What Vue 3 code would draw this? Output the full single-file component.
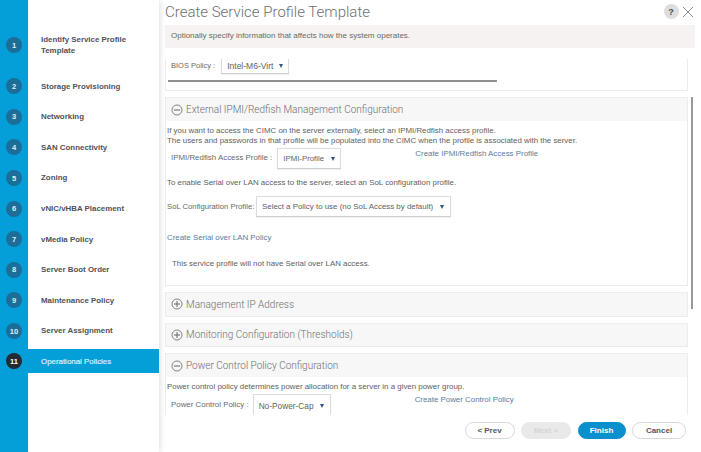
<script setup>
const steps = [
  'Identify Service Profile Template',
  'Storage Provisioning',
  'Networking',
  'SAN Connectivity',
  'Zoning',
  'vNIC/vHBA Placement',
  'vMedia Policy',
  'Server Boot Order',
  'Maintenance Policy',
  'Server Assignment',
  'Operational Policies'
]
const activeStep = 11
</script>

<template>
  <div class="wizard">
    <aside class="sidebar">
      <div
        v-for="(step, i) in steps"
        :key="step"
        class="step"
        :class="{ active: i + 1 === activeStep, first: i === 0 }"
      >
        <div class="rail"><span class="num">{{ i + 1 }}</span></div>
        <div class="label">{{ step }}</div>
      </div>
    </aside>

    <main class="main">
      <header class="title-row">
        <h1>Create Service Profile Template</h1>
        <span class="help">?</span>
        <svg class="close" width="12" height="12" viewBox="0 0 12 12">
          <path d="M1 1 L11 11 M11 1 L1 11" stroke="#6b6b6b" stroke-width="0.8" fill="none" />
        </svg>
      </header>
      <div class="info">Optionally specify information that affects how the system operates.</div>

      <div class="scroller">
        <div class="scroll-content">
          <section class="panel bios">
            <div class="field bios-field">
              <span class="field-label">BIOS Policy :</span>
              <span class="select bios-select">Intel-M6-Virt <i class="caret"></i></span>
            </div>
            <div class="hbar"></div>
          </section>

          <section class="panel">
            <div class="panel-head">
              <svg class="toggle" width="12" height="12" viewBox="0 0 12 12">
                <circle cx="6" cy="6" r="5" stroke="#777" fill="none" stroke-width="0.9" />
                <path d="M3 6 H9" stroke="#666" stroke-width="1" />
              </svg>
              External IPMI/Redfish Management Configuration
            </div>
            <div class="panel-body ipmi">
              <p class="copy">If you want to access the CIMC on the server externally, select an IPMI/Redfish access profile.<br>The users and passwords in that profile will be populated into the CIMC when the profile is associated with the server.</p>
              <div class="field ipmi-field">
                <span class="field-label">IPMI/Redfish Access Profile :</span>
                <span class="select ipmi-select">IPMI-Profile <i class="caret"></i></span>
                <a class="link">Create IPMI/Redfish Access Profile</a>
              </div>
              <p class="copy sol-copy">To enable Serial over LAN access to the server, select an SoL configuration profile.</p>
              <div class="field sol-field">
                <span class="sol-label">SoL Configuration Profile:</span>
                <span class="select sol-select">Select a Policy to use (no SoL Access by default) <i class="caret"></i></span>
              </div>
              <a class="link sol-link">Create Serial over LAN Policy</a>
              <p class="copy sol-note">This service profile will not have Serial over LAN access.</p>
            </div>
          </section>

          <section class="panel collapsed">
            <div class="panel-head">
              <svg class="toggle" width="12" height="12" viewBox="0 0 12 12">
                <circle cx="6" cy="6" r="5" stroke="#777" fill="none" stroke-width="0.9" />
                <path d="M3 6 H9 M6 3 V9" stroke="#666" stroke-width="1" />
              </svg>
              Management IP Address
            </div>
          </section>

          <section class="panel collapsed">
            <div class="panel-head">
              <svg class="toggle" width="12" height="12" viewBox="0 0 12 12">
                <circle cx="6" cy="6" r="5" stroke="#777" fill="none" stroke-width="0.9" />
                <path d="M3 6 H9 M6 3 V9" stroke="#666" stroke-width="1" />
              </svg>
              Monitoring Configuration (Thresholds)
            </div>
          </section>

          <section class="panel">
            <div class="panel-head">
              <svg class="toggle" width="12" height="12" viewBox="0 0 12 12">
                <circle cx="6" cy="6" r="5" stroke="#777" fill="none" stroke-width="0.9" />
                <path d="M3 6 H9" stroke="#666" stroke-width="1" />
              </svg>
              Power Control Policy Configuration
            </div>
            <div class="panel-body">
              <p class="copy">Power control policy determines power allocation for a server in a given power group.</p>
              <div class="field power-field">
                <span class="field-label">Power Control Policy :</span>
                <span class="select power-select">No-Power-Cap <i class="caret"></i></span>
                <a class="link">Create Power Control Policy</a>
              </div>
            </div>
          </section>
        </div>
        <div class="vbar"></div>
      </div>

      <footer class="footer">
        <button class="btn prev">&lt; Prev</button>
        <button class="btn next">Next &gt;</button>
        <button class="btn finish">Finish</button>
        <button class="btn cancel">Cancel</button>
      </footer>
    </main>
  </div>
</template>

<style scoped>
.wizard {
  display: flex;
  width: 701px;
  height: 452px;
  overflow: hidden;
  background: #fff;
  font-family: "Liberation Sans", Arial, sans-serif;
  color: #58585b;
}

/* left step list */
.sidebar {
  width: 159px;
  flex: none;
  padding-top: 31px;
  background: linear-gradient(to right, #049fd9 28px, #fff 28px);
  box-shadow: 2px 0 5px rgba(0, 0, 0, 0.1);
  position: relative;
  z-index: 1;
}
.step {
  display: flex;
  align-items: center;
  height: 30.6px;
}
.step.first {
  height: 28px;
  margin-bottom: 12px;
}
.step.active {
  height: 24px;
  margin-top: 3px;
  background: #049fd9;
}
.rail {
  width: 28px;
  flex: none;
  display: flex;
  justify-content: center;
}
.num {
  width: 16px;
  height: 16px;
  border-radius: 50%;
  background: #1c6d97;
  color: #e6eef3;
  font-size: 7.5px;
  font-weight: bold;
  display: flex;
  align-items: center;
  justify-content: center;
}
.step.active .num {
  background: #222a33;
  color: #fff;
}
.label {
  margin-left: 13px;
  width: 100px;
  font-size: 7.9px;
  font-weight: bold;
  line-height: 11.5px;
  color: #4f5258;
}
.step.active .label {
  color: #d6f1fb;
  font-weight: normal;
  -webkit-text-stroke: 0.2px #d6f1fb;
}

/* right side */
.main {
  flex: 1;
  min-width: 0;
  display: flex;
  flex-direction: column;
  padding-left: 6px;
}
.title-row {
  height: 25px;
  box-sizing: border-box;
  padding: 0 7px 2px 0;
  flex: none;
  display: flex;
  align-items: center;
}
h1 {
  margin: 0;
  flex: 1;
  font-family: Roboto, "Liberation Sans", sans-serif;
  font-size: 15px;
  font-weight: 300;
  color: #6c6f73;
}
.help {
  width: 15px;
  height: 15px;
  border-radius: 50%;
  background: #dedede;
  color: #4a4a4a;
  font-size: 9px;
  font-weight: bold;
  display: flex;
  align-items: center;
  justify-content: center;
  margin-right: 3.5px;
}
.info {
  height: 23px;
  flex: none;
  width: 530px;
  background: #f5f2f1;
  font-size: 8px;
  line-height: 22px;
  padding-left: 6px;
  box-sizing: border-box;
  color: #6a6a6a;
}
.scroller {
  position: relative;
  height: 356px;
  margin-top: 11px;
  flex: none;
  overflow: hidden;
  width: 530px;
}
.scroll-content {
  width: 523px;
}
.panel {
  border: 1px solid #ececec;
  border-top-color: #eee;
  margin-bottom: 6px;
  box-sizing: border-box;
}
.panel.bios {
  border-top: none;
  height: 32px;
  position: relative;
}
.field {
  display: flex;
  align-items: center;
  font-size: 7.9px;
}
.bios-field {
  padding-left: 5px;
  height: 15px;
}
.field-label {
  color: #6a6a6a;
}
.select {
  display: flex;
  align-items: center;
  justify-content: space-between;
  box-sizing: border-box;
  flex: none;
  white-space: nowrap;
  border: 1px solid #dcdcdc;
  border-bottom: 1px solid #cfcfcf;
  box-shadow: 0 1px 1px rgba(0, 0, 0, 0.05);
  color: #5f5f5f;
  padding: 0 5px;
  background: #fff;
}
.bios-field .field-label {
  margin-top: -3px;
  font-size: 7.5px;
}
.bios-select {
  width: 68px;
  height: 15px;
  margin-left: 6px;
  border-top: none;
  font-size: 8.5px;
}
.caret {
  width: 0;
  height: 0;
  border-left: 2.5px solid transparent;
  border-right: 2.5px solid transparent;
  border-top: 4px solid #33557c;
}
.hbar {
  position: absolute;
  left: 2px;
  top: 21px;
  width: 329px;
  height: 2px;
  background: #909090;
}
.panel-head {
  height: 23px;
  background: #f7f7f7;
  display: flex;
  align-items: center;
  gap: 3px;
  padding-left: 5px;
  font-family: Roboto, "Liberation Sans", sans-serif;
  font-weight: 300;
  font-size: 10px;
  color: #6c6e71;
}
.collapsed .panel-head {
  height: 22.5px;
}
.panel-body {
  padding: 5px 0 0 1px;
  box-sizing: border-box;
}
.ipmi {
  height: 164px;
}
.copy {
  margin: 0;
  font-size: 7.9px;
  line-height: 10px;
  color: #606060;
}
.ipmi-field {
  margin-top: 2px;
  padding-left: 4px;
}
.ipmi-field .field-label {
  margin-top: -3px;
}
.ipmi-select {
  width: 64px;
  height: 21px;
  margin-left: 5px;
  font-size: 7.8px;
}
.link {
  font-size: 7.9px;
  line-height: 10px;
  color: #5a7d9c;
  margin-left: 74px;
  margin-top: -10px;
}
.sol-copy {
  margin-top: 9px;
}
.sol-field {
  margin-top: 8px;
}
.sol-label {
  color: #6a6a6a;
  font-size: 7.7px;
  width: 89px;
  flex: none;
  white-space: nowrap;
}
.sol-select {
  width: 195px;
  height: 21px;
  padding-right: 6px;
}
.sol-link {
  display: block;
  margin: 16px 0 0 0;
}
.sol-note {
  margin: 16px 0 0 5px;
}
.power-field {
  margin-top: 2px;
  padding-left: 4px;
}
.power-field .field-label {
  margin-top: -4px;
}
.power-select {
  width: 78px;
  height: 24px;
  margin-left: 4px;
  padding-right: 6px;
  font-size: 8.3px;
}
.power-field .link {
  margin-left: 84px;
  margin-top: -12px;
}
.vbar {
  position: absolute;
  top: 38px;
  right: 2.5px;
  width: 2px;
  height: 212px;
  background: #9a9a9a;
}

.footer {
  flex: 1;
  display: flex;
  align-items: flex-start;
  justify-content: flex-end;
  gap: 6.5px;
  padding: 7px 15px 0 0;
}
.btn {
  height: 17px;
  border-radius: 9px;
  font-family: "Liberation Sans", Arial, sans-serif;
  font-size: 8px;
  font-weight: bold;
  border: 1px solid #d8d8d8;
  background: #fff;
  color: #53565a;
  padding: 0;
}
.prev { width: 50px; }
.next { width: 50px; background: #e9e9e9; border-color: #e9e9e9; color: #d5d5d5; }
.finish { width: 48px; background: #0a90cc; border-color: #0a90cc; color: #fff; }
.cancel { width: 54px; }
</style>

<style>
html, body { margin: 0; background: #fff; }
</style>
